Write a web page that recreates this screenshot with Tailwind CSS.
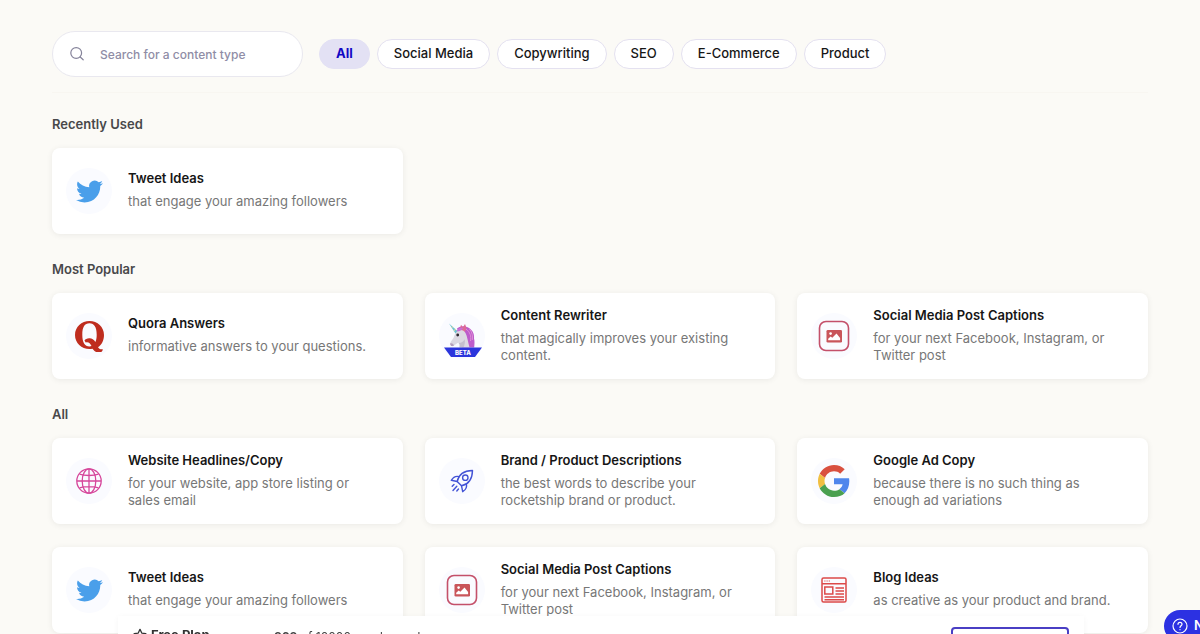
<!DOCTYPE html>
<html lang="en">

<head>
    <meta charset="UTF-8">
    <meta name="viewport" content="width=device-width, initial-scale=1.0">
    <title>Content types</title>
    <script src="https://cdn.jsdelivr.net/npm/@tailwindcss/browser@4"></script>
</head>

<body class="bg-[#fbfaf6] font-['Inter',sans-serif] text-[13px] text-[#161616] overflow-hidden h-screen">

    <!-- Shared icons -->
    <svg class="hidden">
        <symbol id="twitter" viewBox="0 0 24 24">
            <path fill="#4a9fea" d="M23.953 4.57a10 10 0 01-2.825.775 4.958 4.958 0 002.163-2.723c-.951.555-2.005.959-3.127 1.184a4.92 4.92 0 00-8.384 4.482C7.69 8.095 4.067 6.13 1.64 3.162a4.822 4.822 0 00-.666 2.475c0 1.71.87 3.213 2.188 4.096a4.904 4.904 0 01-2.228-.616v.06a4.923 4.923 0 003.946 4.827 4.996 4.996 0 01-2.212.085 4.936 4.936 0 004.604 3.417 9.867 9.867 0 01-6.102 2.105c-.39 0-.779-.023-1.17-.067a13.995 13.995 0 007.557 2.209c9.053 0 13.998-7.496 13.998-13.985 0-.21 0-.42-.015-.63A9.935 9.935 0 0024 4.59z" />
        </symbol>
        <symbol id="picture" viewBox="0 0 32 32">
            <rect x="1.5" y="1.5" width="29" height="29" rx="6.5" fill="none" stroke="#c4506a" stroke-width="1.6" />
            <rect x="8.5" y="10" width="15.5" height="12.5" rx="1.3" fill="#c9555a" />
            <circle cx="12.6" cy="13.6" r="1.3" fill="#fff" />
            <path fill="#fff" d="M10.2 20.2v-1.4l2.5-2.3 1.6 1.3 4.2-4.3 3.6 4.4v2.3z" />
        </symbol>
    </svg>

    <div class="mx-[52px]">

        <!-- Search and filters -->
        <header class="flex items-center gap-4 pt-[31px] pb-[15px] border-b border-[#f8f6f1]">
            <label for="search" class="flex items-center w-[251px] h-[46px] px-4 bg-white border border-[#e9e8ef] rounded-full">
                <svg class="w-4 h-4 shrink-0" viewBox="0 0 16 16" fill="none" stroke="#85839a" stroke-width="1.2" stroke-linecap="round">
                    <circle cx="7.2" cy="7" r="5.4" />
                    <path d="M11.2 11l3 2.8" />
                </svg>
                <input id="search" type="text" placeholder="Search for a content type" class="ml-[15px] w-full pt-[2px] text-xs font-medium outline-none placeholder:text-[#8f8da6]">
            </label>
            <nav class="flex gap-[7px] -mt-px font-medium">
                <button class="h-[30px] px-4 rounded-full border border-[#e3e1f4] bg-[#e3e1f4] font-bold text-[#1208c4]">All</button>
                <button class="h-[30px] px-4 rounded-full border border-[#e4e1f0] bg-white">Social Media</button>
                <button class="h-[30px] px-4 rounded-full border border-[#e4e1f0] bg-white">Copywriting</button>
                <button class="h-[30px] px-4 rounded-full border border-[#e4e1f0] bg-white">SEO</button>
                <button class="h-[30px] px-4 rounded-full border border-[#e4e1f0] bg-white">E-Commerce</button>
                <button class="h-[30px] px-4 rounded-full border border-[#e4e1f0] bg-white">Product</button>
            </nav>
        </header>

        <main class="flex flex-col gap-[25px] pt-[21px]">

            <section>
                <h2 class="mb-[14px] leading-5 font-semibold text-[#48484a]">Recently Used</h2>
                <div class="grid grid-cols-3 gap-x-[22px] gap-y-[23px]">
                    <a href="#" class="flex items-center gap-4 h-[86px] pl-[14px] pr-5 bg-white rounded-lg shadow-[0_1px_6px_rgba(0,0,0,0.07)]">
                        <span class="flex items-center justify-center shrink-0 size-[46px] rounded-full bg-[#fafbff]">
                            <svg class="size-[27px]"><use href="#twitter" /></svg>
                        </span>
                        <div class="pb-1">
                            <h3 class="leading-5 font-semibold">Tweet Ideas</h3>
                            <p class="mt-[5px] leading-[17px] text-[#777]">that engage your amazing followers</p>
                        </div>
                    </a>
                </div>
            </section>

            <section>
                <h2 class="mb-[14px] leading-5 font-semibold text-[#48484a]">Most Popular</h2>
                <div class="grid grid-cols-3 gap-x-[22px] gap-y-[23px]">
                    <a href="#" class="flex items-center gap-4 h-[86px] pl-[14px] pr-5 bg-white rounded-lg shadow-[0_1px_6px_rgba(0,0,0,0.07)]">
                        <span class="flex items-center justify-center shrink-0 size-[46px] rounded-full bg-[#fafbff]">
                            <svg class="w-8 h-8" viewBox="0 0 32 32" fill="#bf2d1f">
                                <path fill-rule="evenodd" d="M16.500 1C8.500 1 2 7 2 15s6.500 14 14.500 14c1 0 2-.1 3-.3 1.800 2.500 3.800 4 6.800 3.700 2-.2 3.300-1 3.500-3.200-2.500.5-3.800-.5-4.800-1.900 3.800-2.600 6-7 6-12.300C31 7 24.500 1 16.500 1zM16.500 3.300c4.800 0 7.200 4 7.200 11.400 0 3-.4 5.300-1.300 7.300-1.800-2.700-3.600-3.900-6.300-3.700-2.200.1-3.700 1-4.600 2.200l1.200 2c2.800-.8 4.400.6 5.800 3.600-.6.200-1.200.3-2 .3-4.800 0-7.200-4-7.200-11.700S11.700 3.300 16.500 3.300z" />
                            </svg>
                        </span>
                        <div class="pb-1">
                            <h3 class="leading-5 font-semibold">Quora Answers</h3>
                            <p class="mt-[5px] leading-[17px] text-[#777]">informative answers to your questions.</p>
                        </div>
                    </a>
                    <a href="#" class="flex items-center gap-4 h-[86px] pl-[14px] pr-5 bg-white rounded-lg shadow-[0_1px_6px_rgba(0,0,0,0.07)]">
                        <span class="flex items-center justify-center shrink-0 size-[46px] rounded-full bg-[#fafbff]">
                            <svg class="size-[46px]" viewBox="0 0 46 46">
                                <!-- mane, head, horn -->
                                <path fill="#bd5ccb" d="M18 15.500c2-2.500 8-3.500 12-.5 4 2.500 5.500 6.500 5 10.500.8 3 .5 5 .2 9H23l-1-10z" />
                                <path fill="#dd6a96" d="M21 15.500l1-3.700 2 2.500 2-3.300 1.600 4.300-2 4-4-1z" />
                                <path fill="none" stroke="#e08fd6" stroke-width="1" d="M27 16c4 3 5.500 7 4.500 12M30.500 16c2.500 3 3.500 7 2.800 11" />
                                <path fill="#dcd9e2" d="M18.500 18c3-2 6.500-.8 8 2 1.800 3.500 2.300 8 4 14.500H20.500c.5-2.300.2-3.700-1-4.700-2 .6-3.400 2.200-5 3.200-1.800.8-3.500-.2-3.300-2.500.5-2.500 2.700-3.900 3.700-6.500.7-2.200 1.600-4.500 3.600-6z" />
                                <path fill="#c4bfce" d="M19.500 30c3 0 5-1.300 6.200-3.700.5 3.200 0 5.700-1.200 8.200h-4c.5-2.300.2-3.700-1-4.500z" />
                                <path fill="#b49fbb" d="M11.200 30.300c1.500-.5 3 .2 3.800 1.900-1.700 1.700-4 1-3.800-1.900z" />
                                <path fill="#6ec3cf" d="M10 10.500l6.500 10 2-2.500z" />
                                <path stroke="#ecdc9b" stroke-width="1" d="M12.600 14.600l1.400-1M14.800 17.800l2-1.600" />
                                <path fill="#c76fd8" d="M17.500 18.500c.7-3 4-4.500 6.500-3.500-.7 2-3.500 3.600-6.500 3.500z" />
                                <circle cx="18.700" cy="22" r="1.400" fill="#2d2731" />
                                <path fill="#2b35dc" d="M5 34.500h38l-7 9.500H12z" />
                                <text x="24" y="41.500" fill="#fff" font-size="6" font-weight="800" text-anchor="middle">BETA</text>
                            </svg>
                        </span>
                        <div class="pb-1">
                            <h3 class="leading-5 font-semibold">Content Rewriter</h3>
                            <p class="mt-[5px] leading-[17px] text-[#777]">that magically improves your existing content.</p>
                        </div>
                    </a>
                    <a href="#" class="flex items-center gap-4 h-[86px] pl-[14px] pr-5 bg-white rounded-lg shadow-[0_1px_6px_rgba(0,0,0,0.07)]">
                        <span class="flex items-center justify-center shrink-0 size-[46px] rounded-full bg-[#fafbff]">
                            <svg class="w-8 h-8"><use href="#picture" /></svg>
                        </span>
                        <div class="pb-1">
                            <h3 class="leading-5 font-semibold">Social Media Post Captions</h3>
                            <p class="mt-[5px] leading-[17px] text-[#777]">for your next Facebook, Instagram, or Twitter post</p>
                        </div>
                    </a>
                </div>
            </section>

            <section>
                <h2 class="mb-[14px] leading-5 font-semibold text-[#48484a]">All</h2>
                <div class="grid grid-cols-3 gap-x-[22px] gap-y-[23px]">
                    <a href="#" class="flex items-center gap-4 h-[86px] pl-[14px] pr-5 bg-white rounded-lg shadow-[0_1px_6px_rgba(0,0,0,0.07)]">
                        <span class="flex items-center justify-center shrink-0 size-[46px] rounded-full bg-[#fafbff]">
                            <svg class="size-[26px]" viewBox="0 0 26 26" fill="none" stroke="#d6479b" stroke-width="1.3">
                                <circle cx="13" cy="13" r="12.200" />
                                <ellipse cx="13" cy="13" rx="6.800" ry="12.200" />
                                <path d="M13 1v24M1 13h24M3.500 6.200c5 1.700 14 1.700 19 0M3.500 19.800c5-1.700 14-1.700 19 0" />
                            </svg>
                        </span>
                        <div class="pb-1">
                            <h3 class="leading-5 font-semibold">Website Headlines/Copy</h3>
                            <p class="mt-[5px] leading-[17px] text-[#777]">for your website, app store listing or sales email</p>
                        </div>
                    </a>
                    <a href="#" class="flex items-center gap-4 h-[86px] pl-[14px] pr-5 bg-white rounded-lg shadow-[0_1px_6px_rgba(0,0,0,0.07)]">
                        <span class="flex items-center justify-center shrink-0 size-[46px] rounded-full bg-[#fafbff]">
                            <svg class="w-6 h-6" viewBox="0 0 24 24" fill="none" stroke="#4353d6" stroke-width="1.400" stroke-linecap="round" stroke-linejoin="round">
                                <path d="M7.200 12.500C8.500 6 14 1.700 22.500 1.500c-.2 8.500-4.500 14-11 15.300z" />
                                <circle cx="15.300" cy="8.700" r="2.700" />
                                <path d="M9.200 7.700C6 6.800 3.300 8 1.300 11.300l5.900 1.200M16.300 14.800c.9 3.200-.3 5.900-3.600 7.900l-1.200-5.900" />
                                <path d="M6.800 17.200L3 21.500M4 15.500l-1.800 1.800M8.500 20l-1.700 2" />
                            </svg>
                        </span>
                        <div class="pb-1">
                            <h3 class="leading-5 font-semibold">Brand / Product Descriptions</h3>
                            <p class="mt-[5px] leading-[17px] text-[#777]">the best words to describe your rocketship brand or product.</p>
                        </div>
                    </a>
                    <a href="#" class="flex items-center gap-4 h-[86px] pl-[14px] pr-5 bg-white rounded-lg shadow-[0_1px_6px_rgba(0,0,0,0.07)]">
                        <span class="flex items-center justify-center shrink-0 size-[46px] rounded-full bg-[#fafbff]">
                            <svg class="w-8 h-8" viewBox="0 0 48 48">
                                <path fill="#d9503f" d="M24 9.500c3.540 0 6.710 1.220 9.210 3.600l6.850-6.850C35.900 2.380 30.470 0 24 0 14.620 0 6.510 5.380 2.560 13.220l7.980 6.190C12.430 13.720 17.740 9.500 24 9.500z" />
                                <path fill="#4f86ec" d="M46.980 24.550c0-1.570-.15-3.090-.38-4.550H24v9.020h12.940c-.58 2.960-2.260 5.480-4.780 7.180l7.730 6c4.510-4.180 7.090-10.360 7.090-17.650z" />
                                <path fill="#f1bf42" d="M10.530 28.590c-.48-1.450-.76-2.990-.76-4.590s.27-3.140.76-4.590l-7.980-6.190C.92 16.460 0 20.120 0 24c0 3.880.92 7.540 2.560 10.780l7.970-6.190z" />
                                <path fill="#4aa050" d="M24 48c6.480 0 11.930-2.130 15.890-5.810l-7.730-6c-2.150 1.450-4.920 2.300-8.160 2.300-6.260 0-11.570-4.220-13.470-9.910l-7.980 6.190C6.510 42.620 14.620 48 24 48z" />
                            </svg>
                        </span>
                        <div class="pb-1">
                            <h3 class="leading-5 font-semibold">Google Ad Copy</h3>
                            <p class="mt-[5px] leading-[17px] text-[#777]">because there is no such thing as enough ad variations</p>
                        </div>
                    </a>
                    <a href="#" class="flex items-center gap-4 h-[86px] pl-[14px] pr-5 bg-white rounded-lg shadow-[0_1px_6px_rgba(0,0,0,0.07)]">
                        <span class="flex items-center justify-center shrink-0 size-[46px] rounded-full bg-[#fafbff]">
                            <svg class="size-[27px]"><use href="#twitter" /></svg>
                        </span>
                        <div class="pb-1">
                            <h3 class="leading-5 font-semibold">Tweet Ideas</h3>
                            <p class="mt-[5px] leading-[17px] text-[#777]">that engage your amazing followers</p>
                        </div>
                    </a>
                    <a href="#" class="flex items-center gap-4 h-[86px] pl-[14px] pr-5 bg-white rounded-lg shadow-[0_1px_6px_rgba(0,0,0,0.07)]">
                        <span class="flex items-center justify-center shrink-0 size-[46px] rounded-full bg-[#fafbff]">
                            <svg class="w-8 h-8"><use href="#picture" /></svg>
                        </span>
                        <div class="pb-1">
                            <h3 class="leading-5 font-semibold">Social Media Post Captions</h3>
                            <p class="mt-[5px] leading-[17px] text-[#777]">for your next Facebook, Instagram, or Twitter post</p>
                        </div>
                    </a>
                    <a href="#" class="flex items-center gap-4 h-[86px] pl-[14px] pr-5 bg-white rounded-lg shadow-[0_1px_6px_rgba(0,0,0,0.07)]">
                        <span class="flex items-center justify-center shrink-0 size-[46px] rounded-full bg-[#fafbff]">
                            <svg class="size-[26px]" viewBox="0 0 26 26" fill="none" stroke="#dc4a4a" stroke-width="1.500">
                                <rect x="1" y="1" width="24" height="24" rx="1.500" />
                                <path d="M1 6.800h24M14.500 11h8.500M14.500 14h8.500M14.500 17h8.500M3.500 20h19.500M3.500 22.700h19.500" />
                                <rect x="3.800" y="10" width="8" height="7" />
                                <path stroke-width="1" d="M3.300 4h1.200M5.500 4h1.200M7.700 4h1.200" />
                            </svg>
                        </span>
                        <div class="pb-1">
                            <h3 class="leading-5 font-semibold">Blog Ideas</h3>
                            <p class="mt-[5px] leading-[17px] text-[#777]">as creative as your product and brand.</p>
                        </div>
                    </a>
                </div>
            </section>
        </main>
    </div>

    <!-- Plan bar, peeks in from the bottom edge -->
    <div class="fixed left-[118px] right-[116px] -bottom-9 h-[54px] px-[15px] flex items-start bg-white shadow-[0_1px_6px_rgba(0,0,0,0.04)]">
        <div class="flex items-center gap-1 w-[141px] pt-[9px] text-[13px] font-bold leading-5 text-[#333]">
            <svg class="w-[14px] h-[14px]" viewBox="0 0 16 16" fill="none" stroke="#333" stroke-width="1.500" stroke-linejoin="round">
                <path d="M8 1.500l2 4.300 4.700.6-3.500 3.200.9 4.700L8 12l-4.100 2.300.9-4.700L1.300 6.400 6 5.800z" />
            </svg>
            Free Plan
        </div>
        <p class="pt-[11px] text-xs leading-5 text-[#444]"><b>868</b> of 10000 words used</p>
        <button class="ml-auto mt-[11px] w-[118px] h-8 border-2 border-[#4a3fc4] rounded text-xs font-semibold text-[#4a3fc4]">Upgrade</button>
    </div>

    <!-- Help launcher -->
    <button class="fixed left-[calc(100%-36px)] -bottom-2 flex items-center gap-[6px] h-8 pl-2 pr-5 rounded-full bg-[#2c31e2] text-white text-[13px] font-semibold whitespace-nowrap">
        <svg class="w-4 h-4" viewBox="0 0 16 16" fill="none" stroke="#fff" stroke-width="1.200" stroke-linecap="round">
            <circle cx="8" cy="8" r="7" />
            <path d="M6 6.300c0-2.600 4-2.600 4 0 0 1.500-2 1.500-2 3.200M8 11.600v.1" />
        </svg>
        Need help?
    </button>

</body>

</html>
